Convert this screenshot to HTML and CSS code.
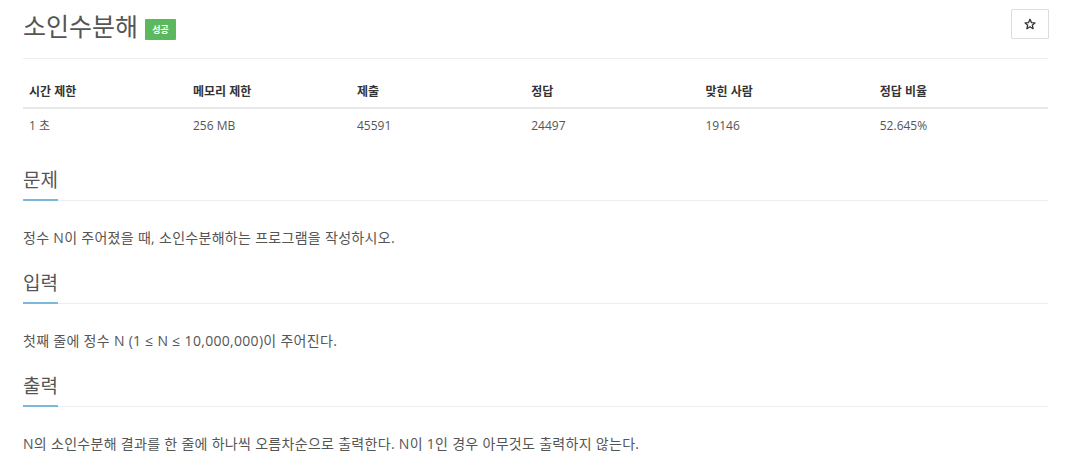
FILE: index.html
```html
<!DOCTYPE html>
<html lang="ko">
<head>
<meta charset="utf-8">
<title>소인수분해</title>
<link rel="stylesheet" href="styles.css">
</head>
<body>
<div class="container">
  <div class="page-header">
    <div class="title-row">
      <h1 class="title">소인수분해</h1>
      <span class="badge">성공</span>
    </div>
    <button class="star-btn" type="button" aria-label="즐겨찾기">
      <svg width="12" height="12" viewBox="0 0 24 24"><path d="M12 2.5l2.9 6.6 7.1.6-5.4 4.7 1.6 7-6.2-3.8-6.2 3.8 1.6-7L2 9.7l7.1-.6z" fill="none" stroke="#333" stroke-width="2.6" stroke-linejoin="round"/></svg>
    </button>
  </div>

  <table class="info">
    <thead>
      <tr>
        <th class="c16">시간 제한</th>
        <th class="c16">메모리 제한</th>
        <th class="c17">제출</th>
        <th class="c17">정답</th>
        <th class="c17">맞힌 사람</th>
        <th>정답 비율</th>
      </tr>
    </thead>
    <tbody>
      <tr>
        <td>1 초</td>
        <td>256 MB</td>
        <td>45591</td>
        <td>24497</td>
        <td>19146</td>
        <td>52.645%</td>
      </tr>
    </tbody>
  </table>

  <section class="section first">
    <h2 class="headline"><span>문제</span></h2>
    <p class="text">정수 N이 주어졌을 때, 소인수분해하는 프로그램을 작성하시오.</p>
  </section>

  <section class="section">
    <h2 class="headline"><span>입력</span></h2>
    <p class="text">첫째 줄에 정수 N (1 ≤ N ≤ 10,000,000)이 주어진다.</p>
  </section>

  <section class="section">
    <h2 class="headline"><span>출력</span></h2>
    <p class="text">N의 소인수분해 결과를 한 줄에 하나씩 오름차순으로 출력한다. N이 1인 경우 아무것도 출력하지 않는다.</p>
  </section>
</div>
</body>
</html>
```

FILE: styles.css
```css
* { box-sizing: border-box; }

body {
  margin: 0;
  background: #fff;
  color: #555;
  font-family: "Open Sans", "Noto Sans CJK KR", sans-serif;
  font-size: 13px;
}

.container {
  padding: 0 21px 0 23px;
}

.page-header {
  display: flex;
  justify-content: space-between;
  align-items: flex-start;
  padding-top: 9px;
  padding-bottom: 15px;
  border-bottom: 1px solid #eee;
}

.title-row {
  display: flex;
  align-items: center;
  height: 34px;
}

.title {
  margin: 0;
  font-size: 25px;
  font-weight: 400;
  line-height: 34px;
  color: #555;
}

.badge {
  display: inline-block;
  margin-left: 7px;
  margin-top: 7px;
  width: 31px;
  height: 21px;
  line-height: 21px;
  text-align: center;
  background: #5cb85c;
  color: #fff;
  font-size: 9px;
  font-weight: 700;
  border-radius: 1px;
}

.star-btn {
  width: 38px;
  height: 30px;
  margin-right: -1px;
  background: #fff;
  border: 1px solid #ddd;
  border-radius: 1px;
  display: flex;
  align-items: center;
  justify-content: center;
  padding: 0;
}

.info {
  width: 100%;
  border-collapse: collapse;
  margin-top: 17px;
  table-layout: fixed;
}

.info th, .info td {
  text-align: left;
  line-height: 20px;
  font-size: 12px;
}

.info th {
  padding: 6px 7px 5px 6px;
  font-weight: 700;
  color: #333;
  border-bottom: 2px solid #e8e8e8;
}

.info td {
  padding: 7px 7px 8px 6px;
  color: #555;
}

.c16 { width: 16%; }
.c17 { width: 17%; }

.section { margin-top: 22px; }
.section.first { margin-top: 23px; }

.headline {
  display: flex;
  margin: 0;
  font-size: 19px;
  font-weight: 400;
  line-height: 26px;
  color: #555;
  border-bottom: 1px solid #eee;
}

.headline span {
  padding-bottom: 6px;
  border-bottom: 2px solid #7ab8dc;
  margin-bottom: -1px;
}

.text {
  margin: 27px 0 0;
  font-size: 14px;
  letter-spacing: 0.3px;
  line-height: 20px;
  color: #555;
}
```
